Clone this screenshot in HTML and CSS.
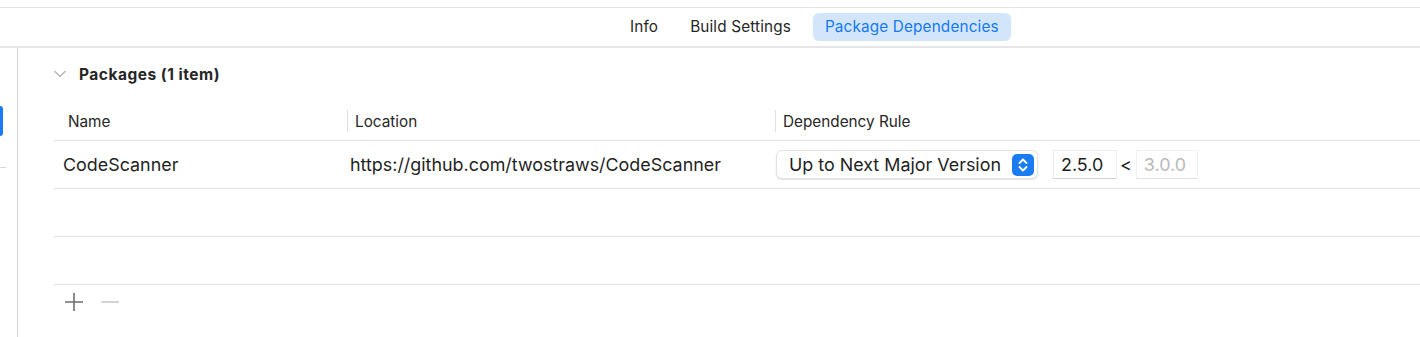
FILE: index.html
```html
<!DOCTYPE html>
<html lang="en">
<head>
    <meta charset="UTF-8">
    <title>Package Dependencies</title>
    <link rel="stylesheet" href="styles.css">
</head>
<body>
    <div class="window">
        <div class="top-strip"></div>
        <div class="tab-bar">
            <span class="tab">Info</span>
            <span class="tab">Build Settings</span>
            <span class="tab tab-active">Package Dependencies</span>
        </div>

        <div class="main">
            <div class="sidebar">
                <div class="sidebar-selected"></div>
                <div class="sidebar-rule"></div>
            </div>

            <div class="content">
                <div class="section-header">
                    <svg class="chevron" width="12" height="8" viewBox="0 0 12 8">
                        <path d="M1 1.5 L6 6.5 L11 1.5" fill="none" stroke="#b4b4b4" stroke-width="1.4" stroke-linecap="round" stroke-linejoin="round"/>
                    </svg>
                    <span class="section-title">Packages (1 item)</span>
                </div>

                <div class="table">
                    <div class="table-head">
                        <div class="col col-name">Name</div>
                        <div class="col col-location"><span class="sep"></span>Location</div>
                        <div class="col col-rule"><span class="sep"></span>Dependency Rule</div>
                    </div>

                    <div class="table-row">
                        <div class="col col-name">CodeScanner</div>
                        <div class="col col-location">https://github.com/twostraws/CodeScanner</div>
                        <div class="col col-rule">
                            <div class="popup">
                                <span class="popup-label">Up to Next Major Version</span>
                                <span class="stepper">
                                    <svg width="22" height="22" viewBox="0 0 22 22">
                                        <path d="M7.5 9 L11 5.5 L14.5 9" fill="none" stroke="#fff" stroke-width="1.8" stroke-linecap="round" stroke-linejoin="round"/>
                                        <path d="M7.5 13 L11 16.5 L14.5 13" fill="none" stroke="#fff" stroke-width="1.8" stroke-linecap="round" stroke-linejoin="round"/>
                                    </svg>
                                </span>
                            </div>
                            <span class="version-field">2.5.0</span>
                            <span class="less-than">&lt;</span>
                            <span class="version-field version-placeholder">3.0.0</span>
                        </div>
                    </div>

                    <div class="table-row empty-row"></div>
                    <div class="table-row empty-row"></div>
                </div>

                <div class="table-actions">
                    <svg class="action" width="20" height="20" viewBox="0 0 20 20">
                        <path d="M10 1 V19 M1 10 H19" stroke="#6e6e6e" stroke-width="1.6"/>
                    </svg>
                    <svg class="action" width="20" height="20" viewBox="0 0 20 20">
                        <path d="M1 10 H19" stroke="#c9c9c9" stroke-width="1.6"/>
                    </svg>
                </div>
            </div>
        </div>
    </div>
</body>
</html>
```

FILE: styles.css
```css
body {
    margin: 0;
    background: #ffffff;
    font-family: Inter, "Noto Sans", sans-serif;
    color: #1f1f1f;
    overflow: hidden;
}

.window {
    width: 1420px;
    height: 337px;
    overflow: hidden;
}

.top-strip {
    height: 7px;
    border-bottom: 1px solid #e4e4e4;
}

.tab-bar {
    height: 38px;
    border-bottom: 2px solid #e6e6e6;
    display: flex;
    align-items: center;
    padding-left: 618px;
}

.tab {
    font-size: 15.3px;
    letter-spacing: 0.15px;
    color: #262626;
    padding: 5px 12px;
    margin-right: 8px;
    border-radius: 6px;
    line-height: 18px;
}

.tab-active {
    background: #d3e5fb;
    color: #1479f2;
    margin-left: 2px;
}

.main {
    display: flex;
    height: 290px;
}

.sidebar {
    width: 17px;
    border-right: 1.5px solid #d6d6d6;
    padding-top: 58px;
}

.sidebar-selected {
    width: 3px;
    height: 30px;
    background: #1a7bf2;
    border-radius: 0 4px 4px 0;
}

.sidebar-rule {
    width: 6px;
    height: 1px;
    background: #d9d9d9;
    margin-top: 31px;
}

.content {
    flex: 1;
    padding-left: 36px;
}

.section-header {
    display: flex;
    align-items: center;
    height: 52px;
}

.chevron {
    margin-right: 13px;
}

.section-title {
    font-size: 15.5px;
    letter-spacing: 0.5px;
    font-weight: 700;
    color: #262626;
}

.table-head {
    display: flex;
    height: 38px;
    padding-top: 2px;
    box-sizing: content-box;
    border-bottom: 1px solid #e0e0e0;
    font-size: 15.3px;
    color: #262626;
}

.table-head .col {
    display: flex;
    align-items: center;
}

.col-name {
    width: 293px;
    padding-left: 14px;
    box-sizing: border-box;
}

.table-row .col-name {
    padding-left: 9px;
}

.col-location {
    width: 428px;
    box-sizing: border-box;
    padding-left: 3px;
}

.table-head .col-location,
.table-head .col-rule {
    padding-left: 0;
}

.sep {
    width: 1px;
    height: 22px;
    background: #e0e0e0;
    margin-right: 7px;
}

.table-row {
    display: flex;
    align-items: center;
    height: 47px;
    border-bottom: 1px solid #e0e0e0;
    font-size: 17.9px;
    color: #1f1f1f;
}

.col-rule {
    display: flex;
    align-items: center;
    padding-left: 1px;
}

.popup {
    display: flex;
    align-items: center;
    height: 29px;
    width: 262px;
    box-sizing: border-box;
    padding: 0 3px 0 12px;
    border-radius: 6px;
    border: 1px solid #e2e2e2;
    box-shadow: 0 1px 1.5px rgba(0, 0, 0, 0.12);
    background: #ffffff;
}

.popup-label {
    flex: 1;
}

.stepper {
    width: 22px;
    height: 22px;
    border-radius: 5px;
    background: #1a7bf2;
    display: flex;
}

.version-field {
    width: 64px;
    height: 29px;
    box-sizing: border-box;
    margin-left: 15px;
    padding-left: 7px;
    line-height: 28px;
    border: 1px solid #ececec;
    border-bottom-color: #d4d4d4;
}

.less-than {
    margin: 0 4px 0 3px;
}

.version-placeholder {
    margin-left: 0;
    width: 62px;
    color: #b9b9b9;
    border-color: #f2f2f2;
    border-bottom-color: #e2e2e2;
}

.table-actions {
    display: flex;
    align-items: center;
    gap: 16px;
    padding-left: 10px;
    height: 34px;
}
```
